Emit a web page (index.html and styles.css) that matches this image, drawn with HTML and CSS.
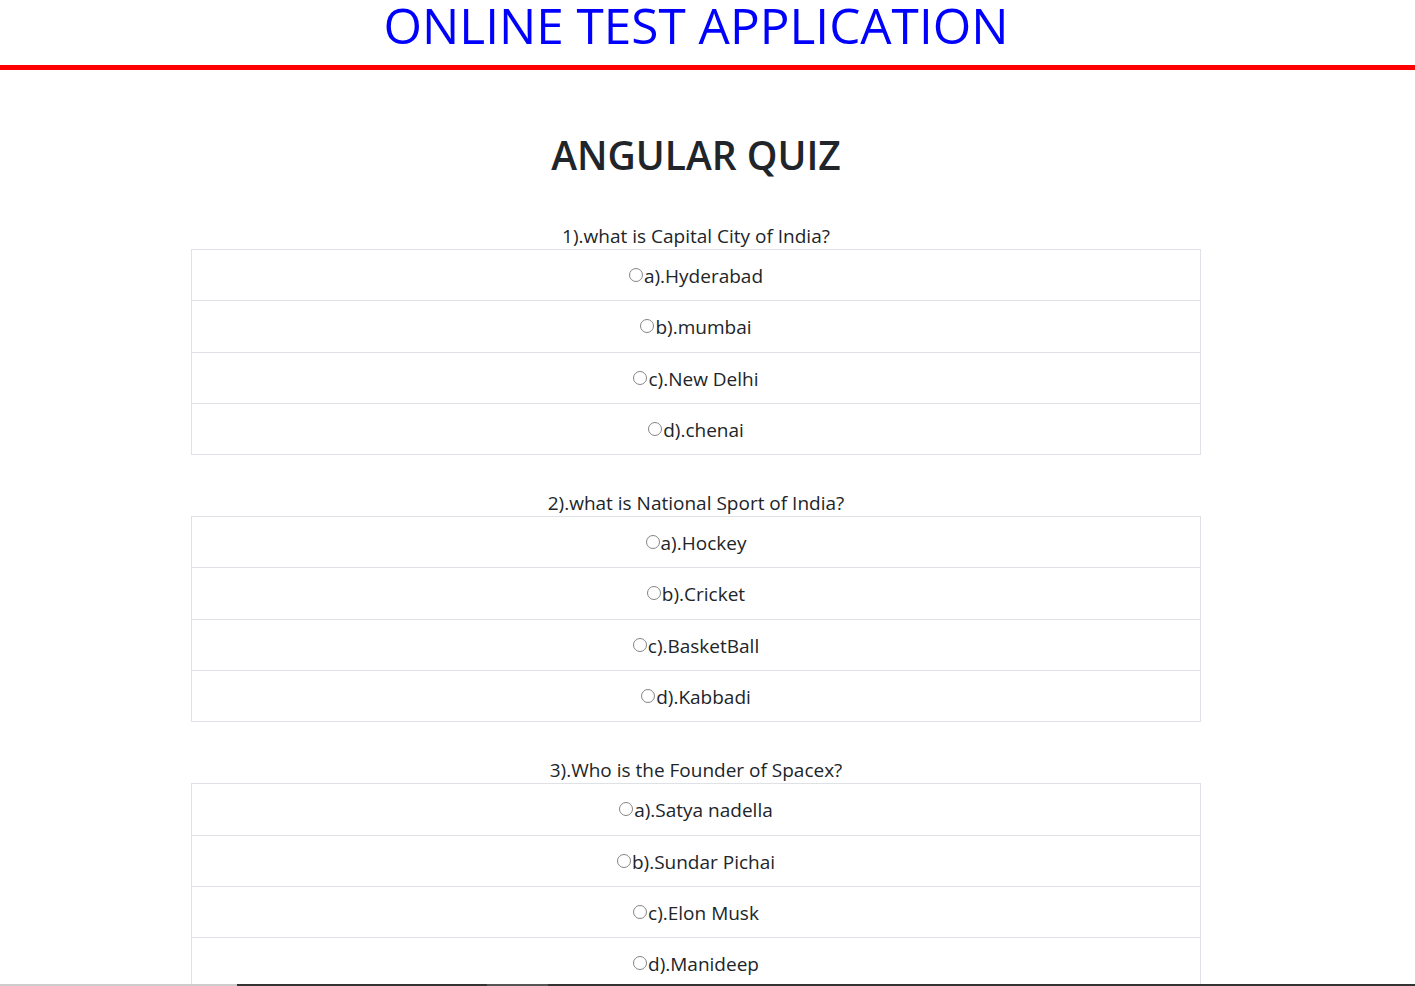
FILE: index.html
```html
<!DOCTYPE html>
<html lang="en">
<head>
<meta charset="utf-8">
<title>Online Test Application</title>
<link rel="stylesheet" href="styles.css">
</head>
<body>
<header class="app-header">
  <h1 class="app-title">ONLINE TEST APPLICATION</h1>
</header>
<main class="page">
  <h2 class="quiz-title">ANGULAR QUIZ</h2>

  <section class="question">
    <p class="question-text">1).what is Capital City of India?</p>
    <table class="options">
      <tr><td><label><input type="radio" name="q1">a).Hyderabad</label></td></tr>
      <tr><td><label><input type="radio" name="q1">b).mumbai</label></td></tr>
      <tr><td><label><input type="radio" name="q1">c).New Delhi</label></td></tr>
      <tr><td><label><input type="radio" name="q1">d).chenai</label></td></tr>
    </table>
  </section>

  <section class="question">
    <p class="question-text">2).what is National Sport of India?</p>
    <table class="options">
      <tr><td><label><input type="radio" name="q2">a).Hockey</label></td></tr>
      <tr><td><label><input type="radio" name="q2">b).Cricket</label></td></tr>
      <tr><td><label><input type="radio" name="q2">c).BasketBall</label></td></tr>
      <tr><td><label><input type="radio" name="q2">d).Kabbadi</label></td></tr>
    </table>
  </section>

  <section class="question">
    <p class="question-text">3).Who is the Founder of Spacex?</p>
    <table class="options">
      <tr><td><label><input type="radio" name="q3">a).Satya nadella</label></td></tr>
      <tr><td><label><input type="radio" name="q3">b).Sundar Pichai</label></td></tr>
      <tr><td><label><input type="radio" name="q3">c).Elon Musk</label></td></tr>
      <tr><td><label><input type="radio" name="q3">d).Manideep</label></td></tr>
    </table>
  </section>
</main>
<div class="bottom-bar"><span class="bar-light"></span><span class="bar-dark"></span><span class="bar-mid"></span><span class="bar-dark bar-fill"></span></div>
</body>
</html>
```

FILE: styles.css
```css
* { box-sizing: border-box; }

html, body {
  margin: 0;
  padding: 0;
  background: #fff;
}

body {
  font-family: "Open Sans", "Noto Sans", sans-serif;
  color: #212529;
  overflow: hidden;
}

.app-header {
  border-bottom: 5px solid #ff0000;
  padding-right: 23px;
  padding-bottom: 15px;
}

.app-title {
  margin: 0;
  text-align: center;
  color: #0000ff;
  font-weight: 500;
  font-size: 49.5px;
  line-height: 50px;
  height: 50px;
}

.page {
  padding-right: 23px;
}

.quiz-title {
  margin: 63px 0 0;
  text-align: center;
  font-size: 39px;
  font-weight: 600;
  line-height: 44px;
}

.question {
  width: 1010px;
  margin: 0 0 0 191px;
}

.quiz-title + .question { margin-top: 46px; }

.question + .question { margin-top: 35px; }

.question-text {
  margin: 0;
  text-align: center;
  font-size: 19px;
  line-height: 26px;
}

.options {
  width: 100%;
  border-collapse: collapse;
  border: 1px solid #dee2e6;
}

.options td {
  border-top: 1px solid #dee2e6;
  text-align: center;
  font-size: 19px;
  line-height: 26px;
  padding: 13px 12px 11.3px;
}

.options label {
  display: inline-flex;
  align-items: center;
}

.options input[type="radio"] {
  appearance: none;
  -webkit-appearance: none;
  width: 14px;
  height: 14px;
  margin: 0 1px 0 0;
  border: 1px solid #858585;
  border-radius: 50%;
  background: #fff;
  position: relative;
  top: -1px;
}

.bottom-bar {
  position: fixed;
  left: 0;
  right: 0;
  bottom: 0;
  height: 2px;
  display: flex;
}

.bar-light { width: 237px; background: #cccccc; }
.bar-dark { width: 250px; background: #333333; }
.bar-mid { width: 61px; background: #555555; }
.bar-fill { flex: 1; }
```
